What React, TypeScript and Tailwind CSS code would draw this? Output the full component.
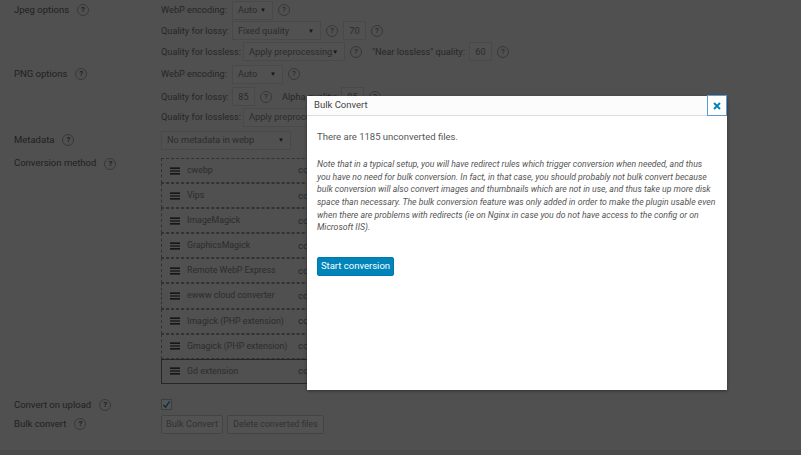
import React from 'react';

function Help({ bold }: { bold?: boolean }) {
  return (
    <span className={`inline-flex items-center justify-center w-[12px] h-[12px] rounded-full border border-[#aaa] text-[8px] leading-none text-[#666] shrink-0 ${bold ? 'font-bold' : ''}`}>
      ?
    </span>
  );
}

function Select({ text, width }: { text: string; width: number }) {
  return (
    <span style={{ width }} className="inline-flex items-center justify-between h-[19px] pl-[5px] pr-[6px] border border-[#dcdcdc] bg-[#f4f4f4] text-[#888] shrink-0">
      <span>{text}</span>
      <span className="text-[6px] leading-none text-[#444]">▼</span>
    </span>
  );
}

function NumberBox({ value }: { value: string }) {
  return (
    <span className="inline-flex items-center justify-center w-[23px] h-[19px] border border-[#dcdcdc] bg-[#f4f4f4] text-[#888] shrink-0">{value}</span>
  );
}

function OptionRow({ label, height, children }: { label?: string; height: number; children: React.ReactNode }) {
  return (
    <div style={{ height }} className="flex items-center">
      <div className="w-[147px] shrink-0 flex items-center gap-[8px] text-[#666]">
        {label && (
          <>
            <span>{label}</span>
            <Help bold />
          </>
        )}
      </div>
      <div className="flex items-center gap-[5px] whitespace-nowrap text-[9.2px] text-[#777]">{children}</div>
    </div>
  );
}

const converters = [
  'cwebp',
  'Vips',
  'ImageMagick',
  'GraphicsMagick',
  'Remote WebP Express',
  'ewww cloud converter',
  'Imagick (PHP extension)',
  'Gmagick (PHP extension)',
  'Gd extension',
];

export default function App() {
  return (
    <div className="relative w-[801px] h-[455px] overflow-hidden bg-[#f1f1f1] text-[9.5px] text-[#777] font-['Roboto','Open_Sans',sans-serif]">
      {/* Settings page behind the dialog */}
      <div className="pl-[14px]">
        <OptionRow label="Jpeg options" height={20}>
          <span className="w-[66px]">WebP encoding:</span>
          <Select text="Auto" width={41} />
          <Help />
        </OptionRow>
        <OptionRow height={21}>
          <span className="w-[66px]">Quality for lossy:</span>
          <Select text="Fixed quality" width={89} />
          <Help />
          <NumberBox value="70" />
          <Help />
        </OptionRow>
        <OptionRow height={21}>
          <span className="w-[77px]">Quality for lossless:</span>
          <Select text="Apply preprocessing" width={102} />
          <Help />
          <span className="ml-[5px] w-[92px]">"Near lossless" quality:</span>
          <NumberBox value="60" />
          <Help />
        </OptionRow>
        <OptionRow label="PNG options" height={24}>
          <span className="w-[66px]">WebP encoding:</span>
          <Select text="Auto" width={51} />
          <Help />
        </OptionRow>
        <OptionRow height={21}>
          <span className="w-[66px]">Quality for lossy:</span>
          <NumberBox value="85" />
          <Help />
          <span className="ml-[5px] w-[54px]">Alpha quality:</span>
          <NumberBox value="85" />
          <Help />
        </OptionRow>
        <OptionRow height={20}>
          <span className="w-[77px]">Quality for lossless:</span>
          <Select text="Apply preprocessing" width={102} />
        </OptionRow>
        <OptionRow label="Metadata" height={26}>
          <Select text="No metadata in webp" width={130} />
        </OptionRow>

        <div className="flex mt-[5px]">
          <div className="w-[147px] shrink-0 flex items-center gap-[8px] h-[11px] text-[#666]">
            <span>Conversion method</span>
            <Help bold />
          </div>
          <div className="w-[400px]">
            {converters.map((name, i) => (
              <div
                key={name}
                className={`flex items-center h-[25.1px] border ${i === converters.length - 1 ? 'border-solid border-[#777]' : 'border-dashed border-[#999]'}`}
              >
                <svg width="10" height="8" viewBox="0 0 10 8" className="ml-[8px] shrink-0 text-[#111]">
                  <path d="M0 .5h10v1.2H0zM0 3.4h10v1.2H0zM0 6.3h10v1.2H0z" fill="currentColor" />
                </svg>
                <span className="ml-[7px] w-[111px] text-[8.8px] whitespace-nowrap text-[#888]">{name}</span>
                <span className="text-[#4a8fb0]">configure</span>
              </div>
            ))}
          </div>
        </div>

        <div className="mt-[14px]">
          <OptionRow label="Convert on upload" height={14}>
            <span className="inline-flex items-center justify-center w-[11px] h-[11px] border border-[#b4b9be] bg-white">
              <svg width="9" height="9" viewBox="0 0 10 10">
                <path d="M1.5 5.5 4 8l4.5-6.5" fill="none" stroke="#1e8cbe" strokeWidth="1.5" />
              </svg>
            </span>
          </OptionRow>
        </div>
        <div className="mt-[3px]">
          <OptionRow label="Bulk convert" height={19}>
            <button className="h-[19px] w-[62px] border border-[#ccc] rounded-[2px] bg-[#f7f7f7] text-[#999]">Bulk Convert</button>
            <button className="-ml-[1px] h-[19px] w-[97px] border border-[#ccc] rounded-[2px] bg-[#f7f7f7] text-[8.8px] text-[#999]">Delete converted files</button>
          </OptionRow>
        </div>
      </div>

      {/* Footer strip */}
      <div className="absolute left-0 right-0 bottom-0 h-[5px] bg-[#e4e4e4]" />

      {/* Backdrop */}
      <div className="absolute inset-0 bg-black/[0.67]" />

      {/* Dialog */}
      <div className="absolute left-[307px] top-[96px] w-[420px] h-[294px] bg-white text-[#555] shadow-[0_1px_3px_rgba(0,0,0,0.4)]">
        <div className="flex items-center h-[20px] pl-[7px] bg-[#fcfcfc] border-b border-[#ddd] text-[#444]">
          Bulk Convert
        </div>
        <button className="absolute -top-[1px] right-0 flex items-center justify-center w-[20px] h-[21px] border border-[#5b9dd9] bg-white">
          <svg width="8" height="8" viewBox="0 0 8 8">
            <path d="M1 1l6 6M7 1L1 7" stroke="#0085ba" strokeWidth="2" />
          </svg>
        </button>
        <div className="pl-[10px]">
          <p className="mt-[14px]">There are 1185 unconverted files.</p>
          <p className="mt-[14px] italic text-[8.7px] leading-[12.6px] whitespace-nowrap">
            Note that in a typical setup, you will have redirect rules which trigger conversion when needed, and thus<br />
            you have no need for bulk conversion. In fact, in that case, you should probably not bulk convert because<br />
            bulk conversion will also convert images and thumbnails which are not in use, and thus take up more disk<br />
            space than necessary. The bulk conversion feature was only added in order to make the plugin usable even<br />
            when there are problems with redirects (ie on Nginx in case you do not have access to the config or on<br />
            Microsoft IIS).
          </p>
          <button className="mt-[23px] h-[19px] w-[77px] rounded-[2px] bg-[#0085ba] border border-[#0079a8] text-white">
            Start conversion
          </button>
        </div>
      </div>
    </div>
  );
}
